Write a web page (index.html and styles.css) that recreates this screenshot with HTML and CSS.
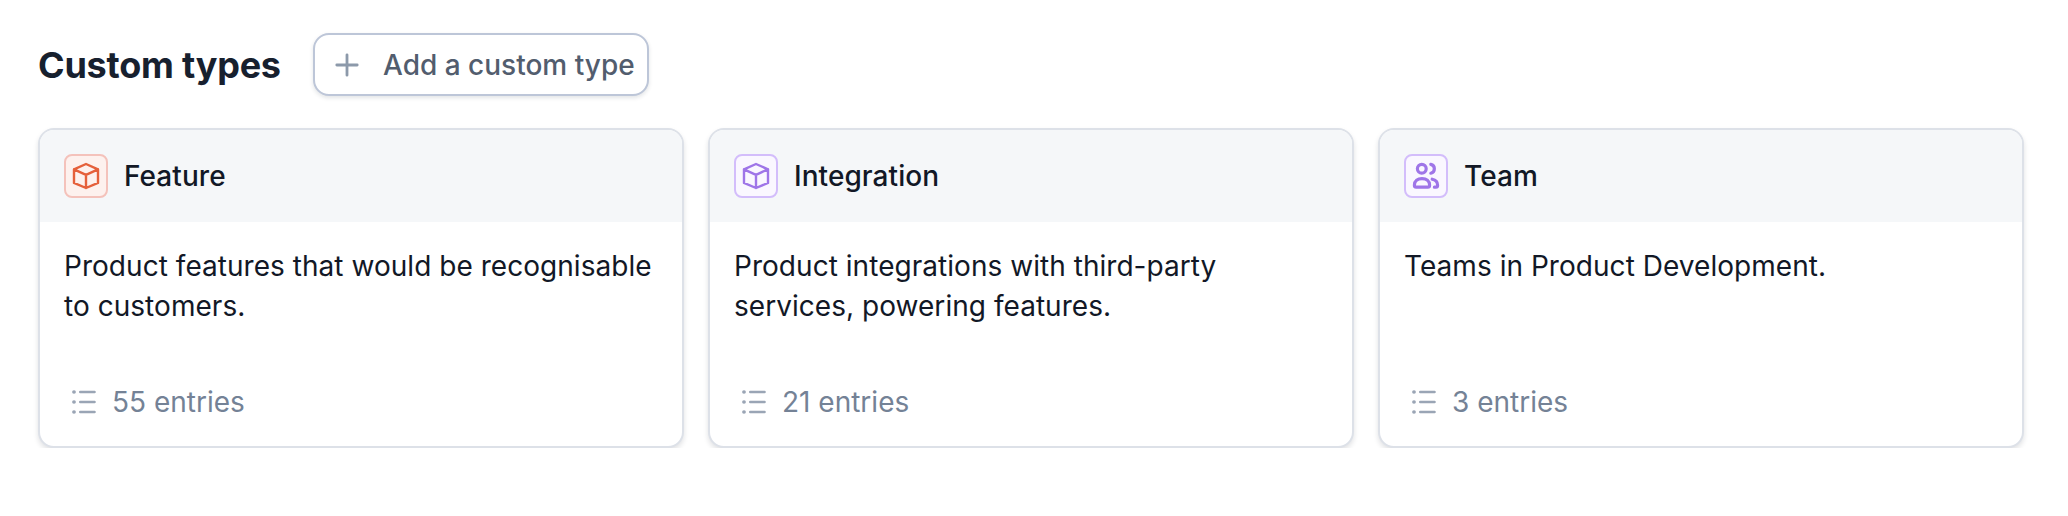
FILE: index.html
```html
<!DOCTYPE html>
<html lang="en">
<head>
<meta charset="utf-8">
<title>Custom types</title>
<link rel="stylesheet" href="styles.css">
</head>
<body>
<svg class="sprite" aria-hidden="true">
  <symbol id="cube" viewBox="0 0 28 28">
    <path d="M14 2 26 7.3V20.9L14 26 2 20.9V7.3ZM2 7.3 14 12.8 26 7.3M14 12.8V26"/>
  </symbol>
  <symbol id="people" viewBox="0 0 28 28">
    <circle cx="9.8" cy="6.8" r="4.4"/>
    <path d="M2.4 23.2C2.4 18.8 5.6 16.6 10 16.6S17.6 18.8 17.6 23.2Q17.6 25.2 15.8 25.2H4.2Q2.4 25.2 2.4 23.2ZM18.8 2.4A4.5 4.5 0 0 1 18.8 11.2M20.2 17.2C23.4 17.8 25.6 20 25.6 23.2Q25.6 25.2 24 25.2H22.4"/>
  </symbol>
  <symbol id="list" viewBox="0 0 24 24">
    <path d="M8.2 2H22.6M8.2 12H22.6M8.2 22H22.6"/>
    <path stroke-width="3.6" d="M1.9 2H2.1M1.9 12H2.1M1.9 22H2.1"/>
  </symbol>
</svg>
<main class="page">
  <header class="toolbar">
    <h1 class="title">Custom types</h1>
    <button class="add-button" type="button">
      <svg class="plus" viewBox="0 0 24 24"><path d="M12 1.8V22.2M1.8 12H22.2"/></svg>
      <span>Add a custom type</span>
    </button>
  </header>
  <section class="cards">
    <article class="card">
      <div class="card-head">
        <span class="badge badge-orange"><svg class="badge-icon"><use href="#cube"/></svg></span>
        <h2 class="name">Feature</h2>
      </div>
      <div class="card-body">
        <p class="description">Product features that would be recognisable to customers.</p>
        <div class="entries"><svg class="list-icon"><use href="#list"/></svg><span>55 entries</span></div>
      </div>
    </article>
    <article class="card">
      <div class="card-head">
        <span class="badge badge-purple"><svg class="badge-icon"><use href="#cube"/></svg></span>
        <h2 class="name">Integration</h2>
      </div>
      <div class="card-body">
        <p class="description">Product integrations with third-party services, powering features.</p>
        <div class="entries"><svg class="list-icon"><use href="#list"/></svg><span>21 entries</span></div>
      </div>
    </article>
    <article class="card">
      <div class="card-head">
        <span class="badge badge-purple"><svg class="badge-icon badge-icon-bold"><use href="#people"/></svg></span>
        <h2 class="name">Team</h2>
      </div>
      <div class="card-body">
        <p class="description">Teams in Product Development.</p>
        <div class="entries"><svg class="list-icon"><use href="#list"/></svg><span>3 entries</span></div>
      </div>
    </article>
  </section>
</main>
</body>
</html>
```
FILE: styles.css
```css
* { box-sizing: border-box; }
body {
  margin: 0;
  background: #fff;
  color: #121826;
  font-family: Inter, "Liberation Sans", sans-serif;
  font-size: 28px;
  line-height: 40px;
}
svg { fill: none; stroke: currentColor; stroke-linecap: round; stroke-linejoin: round; flex: none; }
.sprite { display: none; }
.page { padding: 33px 44px 0 38px; }
.toolbar { display: flex; align-items: center; gap: 32px; height: 63px; }
.title { width: 243px; margin: 0; font-size: 36px; font-weight: 650; line-height: 44px; letter-spacing: -0.22px; color: #17202e; white-space: nowrap; }
.add-button {
  display: flex;
  align-items: center;
  gap: 24px;
  width: 336px;
  height: 63px;
  padding: 0 0 0 20px;
  border: 2px solid #bdc6d8;
  border-radius: 16px;
  background: #fff;
  box-shadow: 0 2px 4px rgba(20, 30, 50, .12);
  color: #525d6e;
  font: 500 28px/40px Inter, "Liberation Sans", sans-serif;
  white-space: nowrap;
}
.plus { width: 24px; height: 24px; color: #8c99aa; stroke-width: 2.8; }
.cards { display: grid; grid-template-columns: repeat(3, 646px); gap: 24px; margin-top: 32px; }
.card {
  height: 320px;
  border: 2px solid #dde1e8;
  border-radius: 16px;
  background: #fff;
  box-shadow: 0 3px 5px rgba(20, 30, 50, .13);
  overflow: hidden;
}
.card-head { display: flex; align-items: center; gap: 16px; height: 92px; padding: 0 24px; background: #f5f7f9; }
.badge { display: grid; place-items: center; width: 44px; height: 44px; border: 2px solid; border-radius: 8px; }
.badge-orange { border-color: #f4c2bb; background: #fdf1ee; color: #e5603b; }
.badge-purple { border-color: #d3bdfb; background: #faf7ff; color: #9f75e8; }
.badge-icon { width: 28px; height: 28px; stroke-width: 2.4; stroke-linejoin: round; }
.badge-icon-bold { stroke-width: 3.2; }
.name { margin: 0; font-size: 28px; font-weight: 500; line-height: 40px; letter-spacing: 0.06px; }
.card-body { padding: 24px; }
.description { height: 80px; margin: 0; letter-spacing: 0.04px; }
.entries { display: flex; align-items: center; gap: 16px; margin-top: 56px; padding-left: 8px; color: #748296; }
.list-icon { width: 24px; height: 24px; color: #9aa5b5; stroke-width: 2.4; overflow: visible; }
```
